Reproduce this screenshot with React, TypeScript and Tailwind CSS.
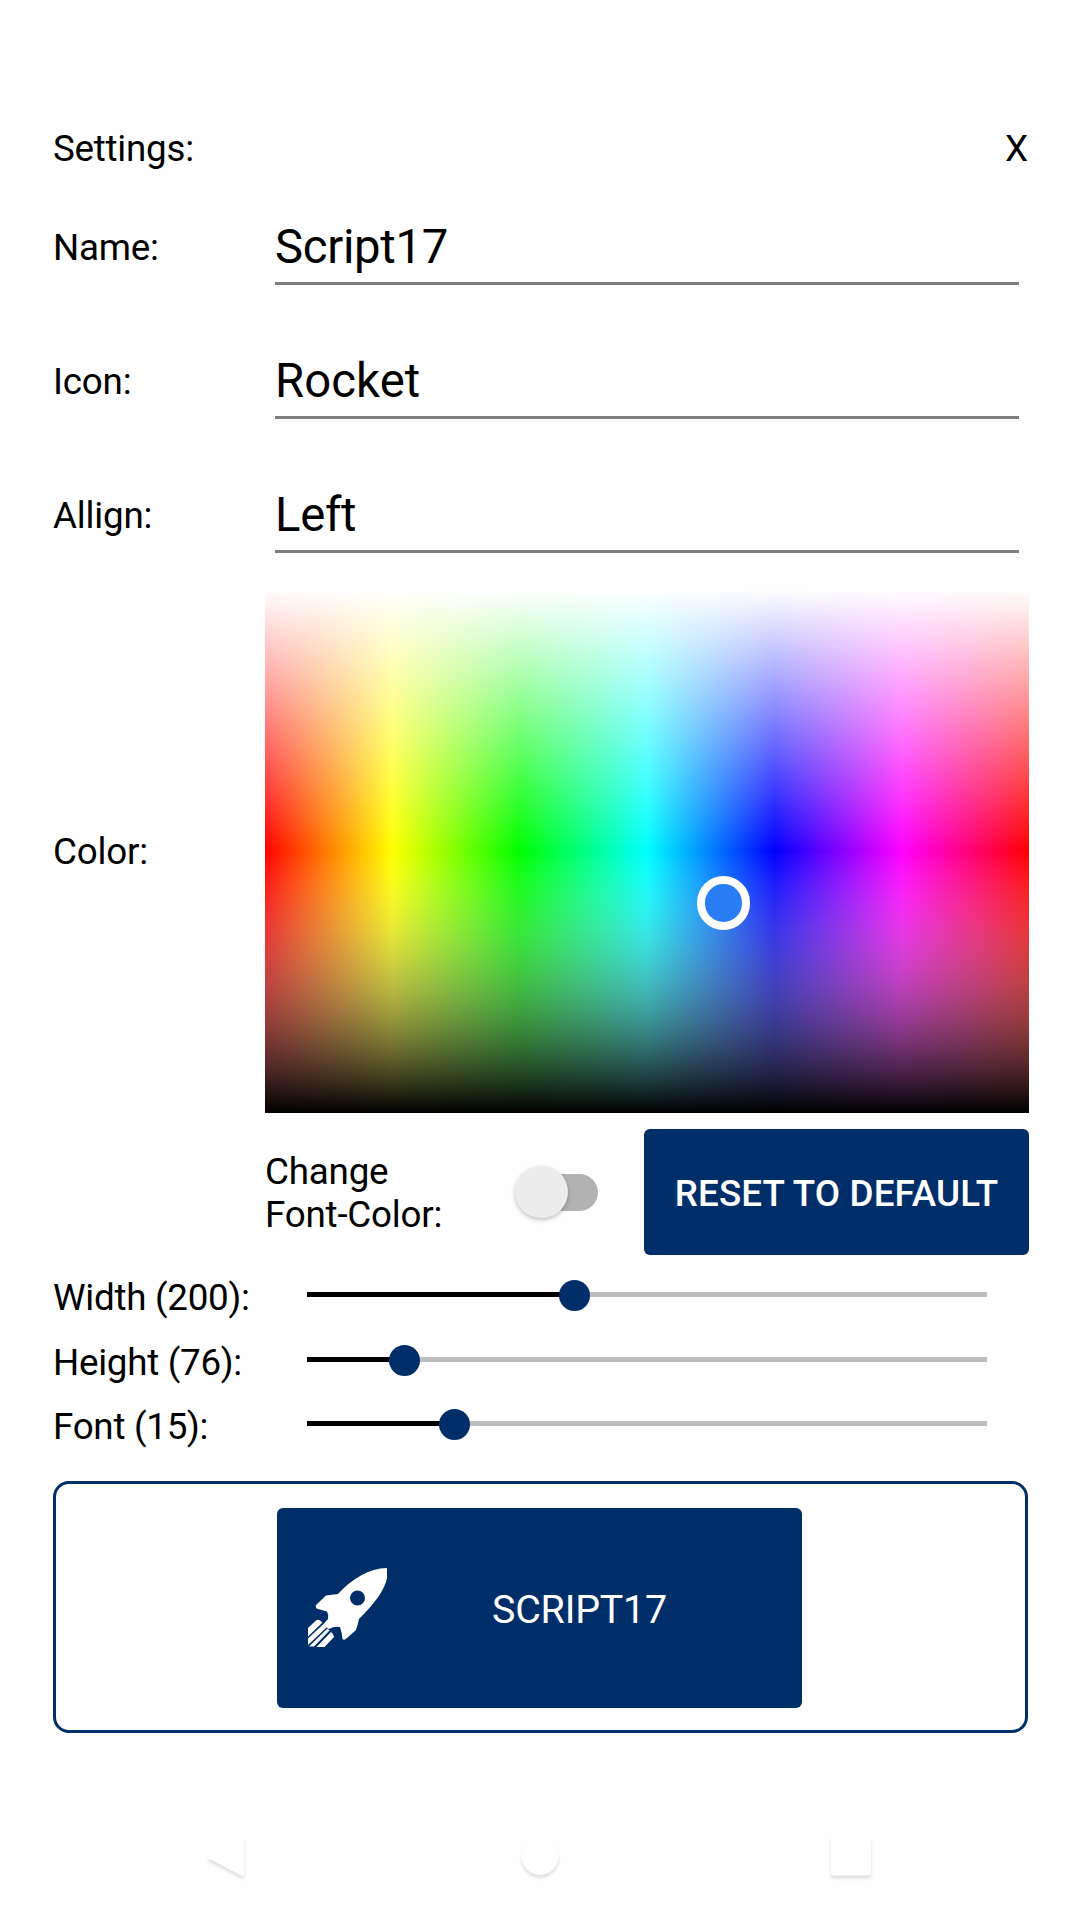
import React from "react";

const fields = [
  { label: "Name:", value: "Script17", tracking: "tracking-[-0.3px]" },
  { label: "Icon:", value: "Rocket", tracking: "tracking-[0.1px]" },
  { label: "Allign:", value: "Left", tracking: "tracking-[-0.3px]" },
];

const sliders = [
  { label: "Width (200):", fill: 267.5 },
  { label: "Height (76):", fill: 97.5 },
  { label: "Font (15):", fill: 147.5 },
];

// Shade ramp: white fades out towards the middle, grey then darkens to black.
const STEPS = 32;
const shade = [
  "rgba(255,255,255,1) 0%",
  "rgba(255,255,255,0) 50%",
  ...Array.from({ length: STEPS }, (_, i) => {
    const t = (i + 1) / STEPS;
    const v = Math.round(255 * (1 - t));
    return `rgba(${v},${v},${v},${t}) ${50 + t * 50}%`;
  }),
].join(",");
const spectrum =
  "linear-gradient(to right,#f00,#ff0,#0f0,#0ff,#00f,#f0f,#f00)";

function ColorField() {
  return (
    <div
      className="relative h-[524px] w-[764px]"
      style={{ backgroundImage: `linear-gradient(to bottom,${shade}),${spectrum}` }}
    >
      <div className="absolute left-[431.5px] top-[287px] size-[53.5px] rounded-full border-8 border-white bg-[#2a7cf5]" />
    </div>
  );
}

function Slider({ label, fill }: { label: string; fill: number }) {
  return (
    <div className="flex h-[64.5px] items-start">
      <div className="w-[254px] whitespace-nowrap pt-[2px] tracking-[-0.27px]">{label}</div>
      <div className="relative mt-[18px] h-[5px] w-[680px] bg-[#bdbdbd]">
        <div className="h-[5px] bg-black" style={{ width: fill }} />
        <div
          className="absolute top-[-12px] size-[31px] rounded-full bg-[#002e69]"
          style={{ left: fill - 15.5 }}
        />
      </div>
    </div>
  );
}

function Rocket() {
  return (
    <svg viewBox="0 0 79 79" className="mt-[-1px] size-[79px]" fill="#fff">
      <path
        fillRule="evenodd"
        d="M79 0C61 0 44 11 30 26L18 27.500L8 37Q7 40 10 41L19 43.500Q21 47 20 51Q17 54 15 57L21 61Q26 58 32 59Q34 65 34.500 71Q36 73 39 70L48 62Q50 56 51 51C66 36 77 22 79 10ZM49.500 22.500A7.500 7.500 0 1 1 49.500 37.500A7.500 7.500 0 1 1 49.500 22.500Z"
      />
      <path d="M0 60L8 52.500Q10 51 12 52.500L14.500 54.500L0 68.500ZM0 70.500L15.500 56L18.500 59.500L0 77ZM1 78.500L19.500 60.500L21.500 62.500L6 78.500ZM8.500 79L23 64Q26 66 26 69L16.500 79Z" />
    </svg>
  );
}

function NavBar() {
  return (
    <div className="ml-[-53px] mt-[102px] flex h-[46px] items-start pl-[206px]">
      <svg width="668" height="48" viewBox="0 0 668 48" className="[filter:drop-shadow(0_3px_1.4px_rgba(0,0,0,0.12))]">
        <path d="M1 22.500L36 3Q38 2 38 4V40Q38 42 36 41Z" fill="#fefefe" />
        <circle cx="334" cy="21.500" r="18.500" fill="#fefefe" />
        <rect x="625" y="2" width="40" height="38.500" rx="3" fill="#fefefe" />
      </svg>
    </div>
  );
}

export default function App() {
  return (
    <div className="h-[1920px] w-[1080px] overflow-hidden bg-[#fefefe] pl-[53px] pt-[127px] font-['Roboto',sans-serif] text-[36.75px] leading-[43px] text-black">
      <div className="flex h-[53px] w-[975px] justify-between">
        <div className="tracking-[-0.25px]">Settings:</div>
        <div>X</div>
      </div>
      {fields.map((f) => (
        <div key={f.label} className="flex h-[134px]">
          <div className="w-[222px] pt-[46px] tracking-[-0.2px]">{f.label}</div>
          <div className="w-[744px] pt-[40px]">
            <div className="h-[65px] w-full border-b-3 border-[#7d7d7d] text-[47.25px] leading-[55px]">
              <span className={f.tracking}>{f.value}</span>
            </div>
          </div>
        </div>
      ))}
      <div className="mt-[7px] flex items-center">
        <div className="w-[212px] tracking-[-0.2px]">Color:</div>
        <ColorField />
      </div>
      <div className="ml-[212px] mt-[16px] flex h-[126px] w-[764px] items-center">
        <div className="w-[250px] pt-[2px] tracking-[-0.2px]">
          Change
          <br />
          Font-Color:
        </div>
        <div className="relative flex h-[53px] w-[83px] items-center">
          <div className="ml-[10px] h-[37px] w-[73px] rounded-full bg-[#b2b2b2]" />
          <div className="absolute left-0 top-0 size-[52.5px] rounded-full bg-[#ececec] shadow-[0_2px_4px_rgba(0,0,0,0.25)]" />
        </div>
        <button className="ml-auto h-[126px] w-[385px] whitespace-nowrap rounded-[6px] bg-[#002e69] pt-[2px] font-medium tracking-[0.15px] text-white">
          RESET TO DEFAULT
        </button>
      </div>
      <div className="mt-[19px]">
        {sliders.map((s) => (
          <Slider key={s.label} {...s} />
        ))}
      </div>
      <div className="mt-[13.5px] flex h-[252px] w-[975px] rounded-[16px] border-3 border-[#002e69] bg-[#fefefe] pl-[221px] pt-[24px]">
        <button className="flex h-[200px] w-[525px] items-center rounded-[6px] bg-[#002e69] pl-[31px] text-[39.375px] tracking-[-0.2px] text-white">
          <Rocket />
          <span className="ml-[105px] pt-[3px]">SCRIPT17</span>
        </button>
      </div>
      <NavBar />
    </div>
  );
}
